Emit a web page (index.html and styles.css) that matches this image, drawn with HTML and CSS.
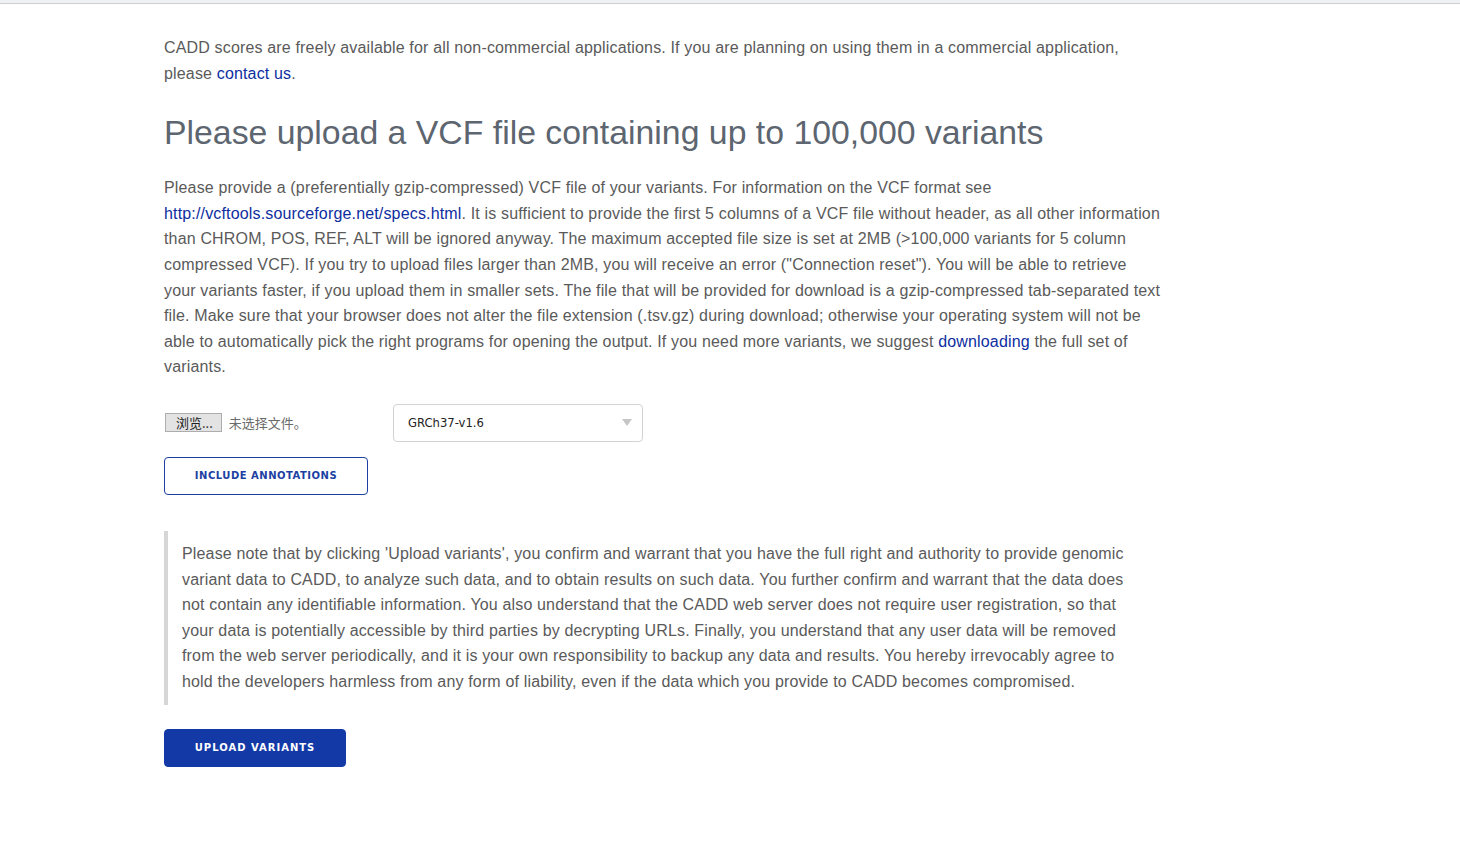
FILE: index.html
```html
<!DOCTYPE html>
<html lang="en">
<head>
<meta charset="utf-8">
<title>CADD - Upload VCF</title>
<link rel="stylesheet" href="styles.css">
</head>
<body>
<div class="topbar"></div>
<main class="container">
  <p class="intro">CADD scores are freely available for all non-commercial applications. If you are planning on using them in a commercial application, please <a href="#">contact us</a>.</p>
  <h1 class="title">Please upload a VCF file containing up to 100,000 variants</h1>
  <p class="desc">Please provide a (preferentially gzip-compressed) VCF file of your variants. For information on the VCF format see <a href="#">http://vcftools.sourceforge.net/specs.html</a>. It is sufficient to provide the first 5 columns of a VCF file without header, as all other information than CHROM, POS, REF, ALT will be ignored anyway. The maximum accepted file size is set at 2MB (&gt;100,000 variants for 5 column compressed VCF). If you try to upload files larger than 2MB, you will receive an error ("Connection reset"). You will be able to retrieve your variants faster, if you upload them in smaller sets. The file that will be provided for download is a gzip-compressed tab-separated text file. Make sure that your browser does not alter the file extension (.tsv.gz) during download; otherwise your operating system will not be able to automatically pick the right programs for opening the output. If you need more variants, we suggest <a href="#">downloading</a> the full set of variants.</p>
  <form class="upload-form">
    <div class="file-row">
      <label class="file-input">
        <span class="file-btn">浏览...</span>
        <span class="file-name">未选择文件。</span>
      </label>
      <div class="select">
        <span class="select-value">GRCh37-v1.6</span>
        <span class="select-arrow"></span>
      </div>
    </div>
    <div class="btn-row">
      <button type="button" class="btn btn-outline">INCLUDE ANNOTATIONS</button>
    </div>
    <blockquote class="note">Please note that by clicking 'Upload variants', you confirm and warrant that you have the full right and authority to provide genomic variant data to CADD, to analyze such data, and to obtain results on such data. You further confirm and warrant that the data does not contain any identifiable information. You also understand that the CADD web server does not require user registration, so that your data is potentially accessible by third parties by decrypting URLs. Finally, you understand that any user data will be removed from the web server periodically, and it is your own responsibility to backup any data and results. You hereby irrevocably agree to hold the developers harmless from any form of liability, even if the data which you provide to CADD becomes compromised.</blockquote>
    <div class="btn-row">
      <button type="button" class="btn btn-primary">UPLOAD VARIANTS</button>
    </div>
  </form>
</main>
</body>
</html>
```
FILE: styles.css
```css
html, body {
  margin: 0;
  padding: 0;
  background: #fff;
}
body {
  font-family: "Liberation Sans", Arial, sans-serif;
  font-size: 16px;
  line-height: 25.6px;
  letter-spacing: 0.16px;
  color: #5a5a5a;
}
.topbar {
  height: 3px;
  background: #f0f1f3;
  border-bottom: 1px solid #cdd0d4;
}
.container {
  width: 997px;
  padding: 31px 0 60px 164px;
}
a {
  color: #0d2ea0;
  text-decoration: none;
}
p {
  margin: 0;
}
.title {
  margin: 24px 0 21px;
  font-size: 33.8px;
  line-height: 44px;
  font-weight: normal;
  letter-spacing: 0;
  color: #5d6670;
}
.desc {
  margin-bottom: 24px;
}
.upload-form {
  display: flex;
  flex-direction: column;
}
.file-row {
  display: flex;
  align-items: center;
  height: 38px;
}
.file-input {
  display: flex;
  align-items: center;
  width: 229px;
  font-family: "Noto Sans CJK SC", sans-serif;
  font-size: 13px;
  line-height: 19px;
  letter-spacing: 0;
}
.file-btn {
  background: #e3e3e3;
  border: 1px solid #adadad;
  color: #222;
  padding: 0 8px 0 10px;
  height: 17px;
  line-height: 17px;
  margin-left: 1px;
}
.file-name {
  margin-left: 7px;
  color: #6a6a6a;
}
.select {
  height: 36px;
  border: 1px solid #d3d3d3;
  border-radius: 4px;
  display: flex;
  align-items: center;
  justify-content: space-between;
  padding: 0 10px 0 14px;
  width: 224px;
}
.select-value {
  font-family: "DejaVu Sans", sans-serif;
  font-size: 11.6px;
  letter-spacing: 0;
  color: #222;
  padding-top: 2px;
}
.select-arrow {
  width: 0;
  height: 0;
  border-left: 5px solid transparent;
  border-right: 5px solid transparent;
  border-top: 7px solid #c6c6c6;
}
.btn-row {
  display: flex;
  margin-top: 15px;
}
.btn {
  height: 38px;
  border-radius: 4px;
  font-family: "DejaVu Sans", sans-serif;
  font-weight: bold;
  font-size: 10px;
  letter-spacing: 1px;
  cursor: pointer;
}
.btn-outline {
  width: 204px;
  background: #fff;
  border: 1px solid #1c3fa3;
  color: #1c3fa3;
  letter-spacing: 0.5px;
}
.btn-primary {
  width: 182px;
  background: #1239a6;
  border: 1px solid #1239a6;
  color: #fff;
}
.note {
  margin: 36px 0 0 0;
  padding: 10px 36px 10px 14px;
  border-left: 4px solid #d6d6d6;
}
.note + .btn-row {
  margin-top: 24px;
}
```
